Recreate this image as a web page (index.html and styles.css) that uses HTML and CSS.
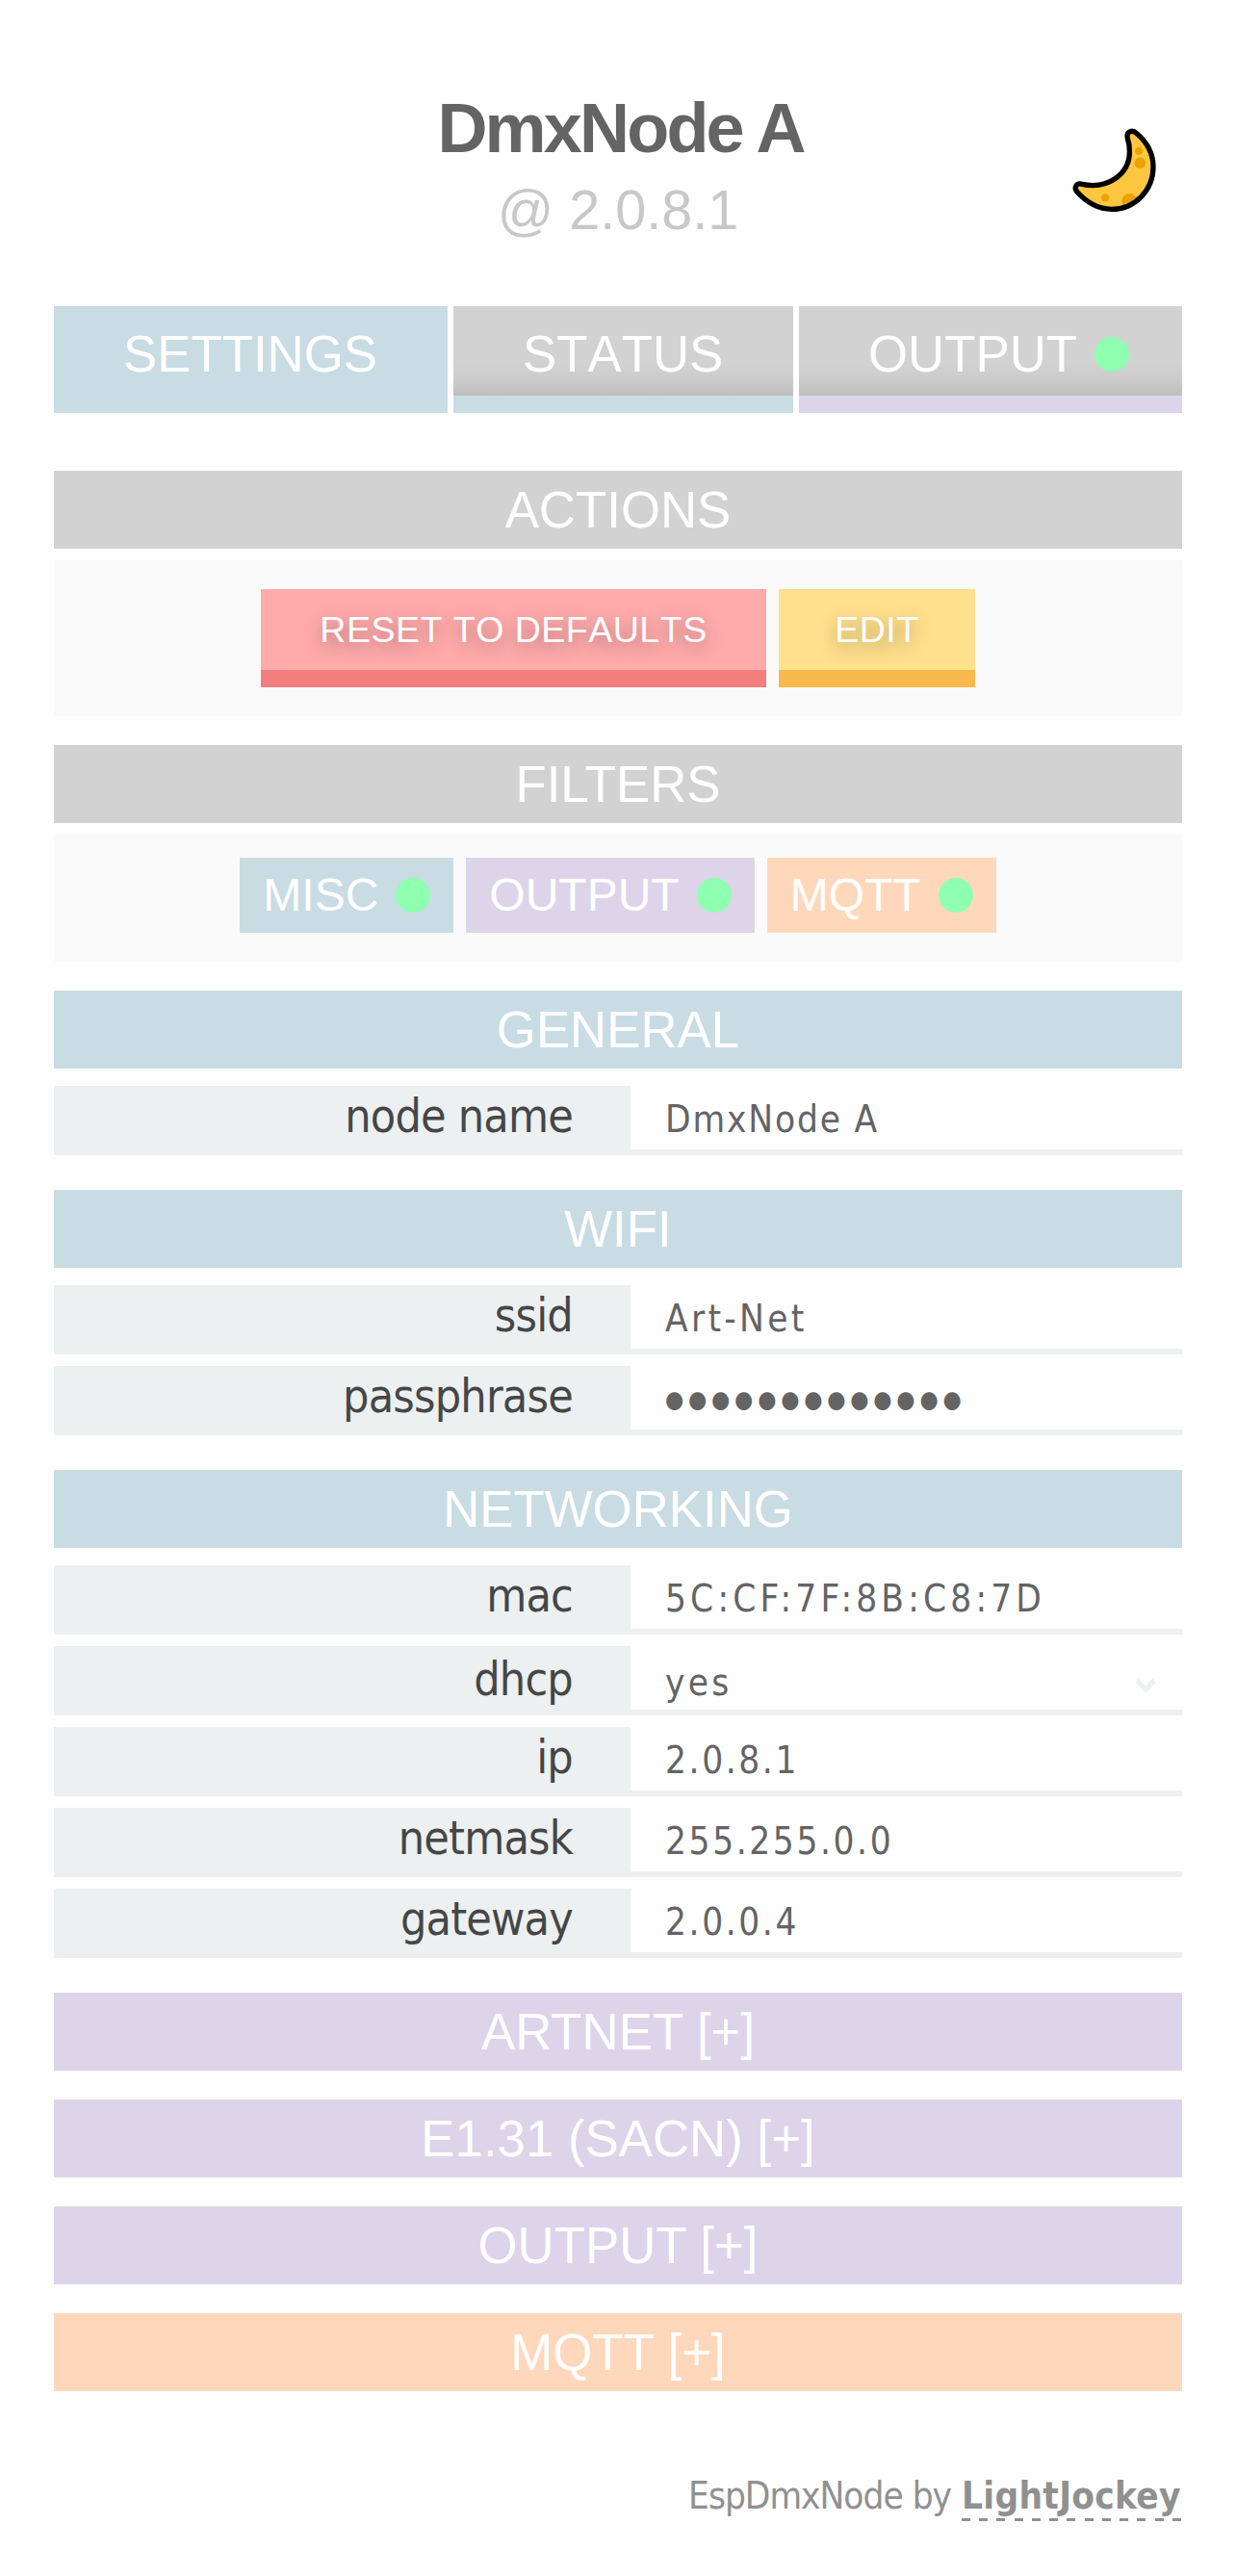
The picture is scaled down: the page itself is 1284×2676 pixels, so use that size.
FILE: index.html
```html
<!DOCTYPE html>
<html lang="en">
<head>
<meta charset="utf-8">
<title>DmxNode A</title>
<link rel="stylesheet" href="styles.css">
</head>
<body>
<header class="header">
  <div class="heading">
    <h1 class="title">DmxNode A</h1>
    <p class="address">@ 2.0.8.1</p>
  </div>
  <svg class="moon" viewBox="70 65 268 268" aria-label="Dark mode">
    <defs><path id="crescent" d="M245 97C242 79 261 72 273 84C309 114 326 150 326 190C326 263 268 322 196 322C150 322 112 295 87 267C77 253 87 239 101 243C180 262 252 215 252 142C252 124 249 110 245 97Z"/>
    <clipPath id="clip"><use href="#crescent"/></clipPath></defs>
    <use href="#crescent" fill="#ffc63f"/>
    <g fill="#eaa300" clip-path="url(#clip)"><circle cx="281" cy="140" r="12.5"/><circle cx="285" cy="177" r="17"/><circle cx="176" cy="286" r="12.5"/><circle cx="252" cy="297" r="24"/></g>
    <use href="#crescent" fill="none" stroke="#000" stroke-width="16" stroke-linejoin="round"/>
  </svg>
</header>

<nav class="tabs">
  <a class="tab tab-active">SETTINGS</a>
  <a class="tab">STATUS</a>
  <a class="tab tab-output">OUTPUT<i class="dot"></i></a>
</nav>

<main>
  <section class="section">
    <h2 class="bar grey">ACTIONS</h2>
    <div class="panel panel-actions">
      <button class="button danger">RESET TO DEFAULTS</button>
      <button class="button warning">EDIT</button>
    </div>
  </section>
  <section class="section">
    <h2 class="bar grey">FILTERS</h2>
    <div class="panel panel-filters">
      <span class="tag blue">MISC<i class="dot"></i></span>
      <span class="tag purple">OUTPUT<i class="dot"></i></span>
      <span class="tag orange">MQTT<i class="dot"></i></span>
    </div>
  </section>
  <section class="section fields">
    <h2 class="bar blue">GENERAL</h2>
    <div class="row"><label class="label">node name</label><div class="value name">DmxNode A</div></div>
  </section>
  <section class="section fields">
    <h2 class="bar blue">WIFI</h2>
    <div class="row"><label class="label">ssid</label><div class="value">Art-Net</div></div>
    <div class="row"><label class="label">passphrase</label><div class="value secret">●●●●●●●●●●●●●</div></div>
  </section>
  <section class="section fields">
    <h2 class="bar blue">NETWORKING</h2>
    <div class="row"><label class="label">mac</label><div class="value mac">5C:CF:7F:8B:C8:7D</div></div>
    <div class="row row-select"><label class="label">dhcp</label><div class="value">yes<svg class="chevron" viewBox="0 0 24 17"><path d="M3 2.5 12 12.5 21 2.5" fill="none" stroke="#ecf0f1" stroke-width="5"/></svg></div></div>
    <div class="row"><label class="label">ip</label><div class="value number">2.0.8.1</div></div>
    <div class="row"><label class="label">netmask</label><div class="value number">255.255.0.0</div></div>
    <div class="row"><label class="label">gateway</label><div class="value number">2.0.0.4</div></div>
  </section>
  <section class="section"><h2 class="bar purple">ARTNET [+]</h2></section>
  <section class="section"><h2 class="bar purple">E1.31 (SACN) [+]</h2></section>
  <section class="section"><h2 class="bar purple">OUTPUT [+]</h2></section>
  <section class="section"><h2 class="bar orange">MQTT [+]</h2></section>
</main>

<footer class="footer"><span class="credit">EspDmxNode by</span><a class="link">LightJockey</a></footer>
</body>
</html>
```
FILE: styles.css
```css
* { box-sizing: border-box; }
body {
  margin: 0;
  padding: 90px 56px 0;
  background: #fefefe;
  font-family: "Liberation Sans", Arial, sans-serif;
}
h1, h2, p { margin: 0; }

.header {
  display: grid;
  grid-template-columns: 1fr auto 1fr;
  height: 228px;
}
.heading { grid-column: 2; text-align: center; }
.title {
  font-size: 72px;
  line-height: 86px;
  letter-spacing: -2.8px;
  margin-right: -5px;
  color: #646464;
}
.address { font-size: 57.6px; line-height: 85px; color: #c8c8c8; }
.moon { width: 89px; height: 89px; justify-self: end; margin: 42px 26px 0 0; }

.tabs { display: flex; gap: 6px; height: 111px; margin-bottom: 60px; }
.tab {
  display: flex;
  align-items: center;
  padding: 7px 54px 0 72px;
  color: #fff;
  font-size: 52.8px;
  font-kerning: none;
  line-height: 1;
  flex: 0 0 353px;
  border-bottom: 18px solid #c9dce3;
  background: linear-gradient(to bottom, #d2d2d2 62%, #cccccc 82%, #bebebe 100%);
}
.tab-active { flex-basis: 409px; background: #c9dce3; }
.tab-output { flex: 1; border-bottom-color: #ddd4e9; }
.dot {
  flex: none;
  width: 36px;
  height: 36px;
  margin-left: 18px;
  border-radius: 50%;
  background: #8fffb0;
}

.section { margin-bottom: 30px; }
.fields { margin-bottom: 36px; }
.bar {
  height: 81px;
  line-height: 81px;
  font-size: 52.8px;
  font-weight: 400;
  text-align: center;
  color: #fff;
}
.grey { background: #d2d2d2; }
.blue { background: #c9dce3; }
.purple { background: #ddd4e9; }
.orange { background: #ffd8bc; }

.panel {
  display: flex;
  justify-content: center;
  gap: 13px;
  margin-top: 12px;
  background: #fafafa;
}
.panel-actions { height: 162px; padding: 30px 0; }
.panel-filters { height: 132px; padding: 24px 0 30px; }
.button {
  width: 525px;
  padding: 0;
  border: 0;
  border-bottom: 18px solid #f07f7e;
  background: #ffaaab;
  color: #fff;
  font: 37.5px/84px "Liberation Sans", Arial, sans-serif;
  font-kerning: none;
  letter-spacing: 0.5px;
  text-shadow: 0 6px 18px rgba(0, 0, 0, 0.35);
}
.warning { width: 204px; border-color: #f9b94c; background: #ffe08c; }
.tag {
  display: flex;
  align-items: center;
  padding: 0 24px;
  color: #fff;
  font-size: 48px;
  line-height: 78px;
}

.row {
  display: flex;
  height: 72px;
  margin-top: 12px;
  line-height: 63px;
  font-family: "DejaVu Sans Condensed", "DejaVu Sans", sans-serif;
  font-stretch: condensed;
}
.bar + .row { margin-top: 18px; }
.label {
  width: 599px;
  padding-right: 60px;
  background: #ecf0f1;
  color: #464646;
  font-size: 48px;
  letter-spacing: -0.8px;
  text-align: right;
}
.value {
  flex: 1;
  display: flex;
  padding: 3px 26px 0 36px;
  border-bottom: 6px solid #ecf0f1;
  color: #646464;
  font-size: 38.4px;
  letter-spacing: 3.3px;
}
.name { letter-spacing: 1.85px; }
.number { letter-spacing: 2.6px; }
.mac { letter-spacing: 4.15px; }
.secret { font-size: 24.5px; letter-spacing: 4.8px; }
.row-select { line-height: 69px; }
.chevron { width: 24px; height: 17px; margin: 30px 0 0 auto; }

.footer {
  display: flex;
  justify-content: flex-end;
  gap: 11px;
  padding-top: 50px;
  color: #909090;
  font: 38.4px/58px "DejaVu Sans Condensed", "DejaVu Sans", sans-serif;
  font-stretch: condensed;
}
.credit { letter-spacing: -1px; }
.link {
  width: 229px;
  height: 55px;
  font-weight: 700;
  letter-spacing: 0.3px;
  background: repeating-linear-gradient(to right, #909090 0 9px, transparent 9px 18.25px) left bottom / 100% 3px no-repeat;
}
```
